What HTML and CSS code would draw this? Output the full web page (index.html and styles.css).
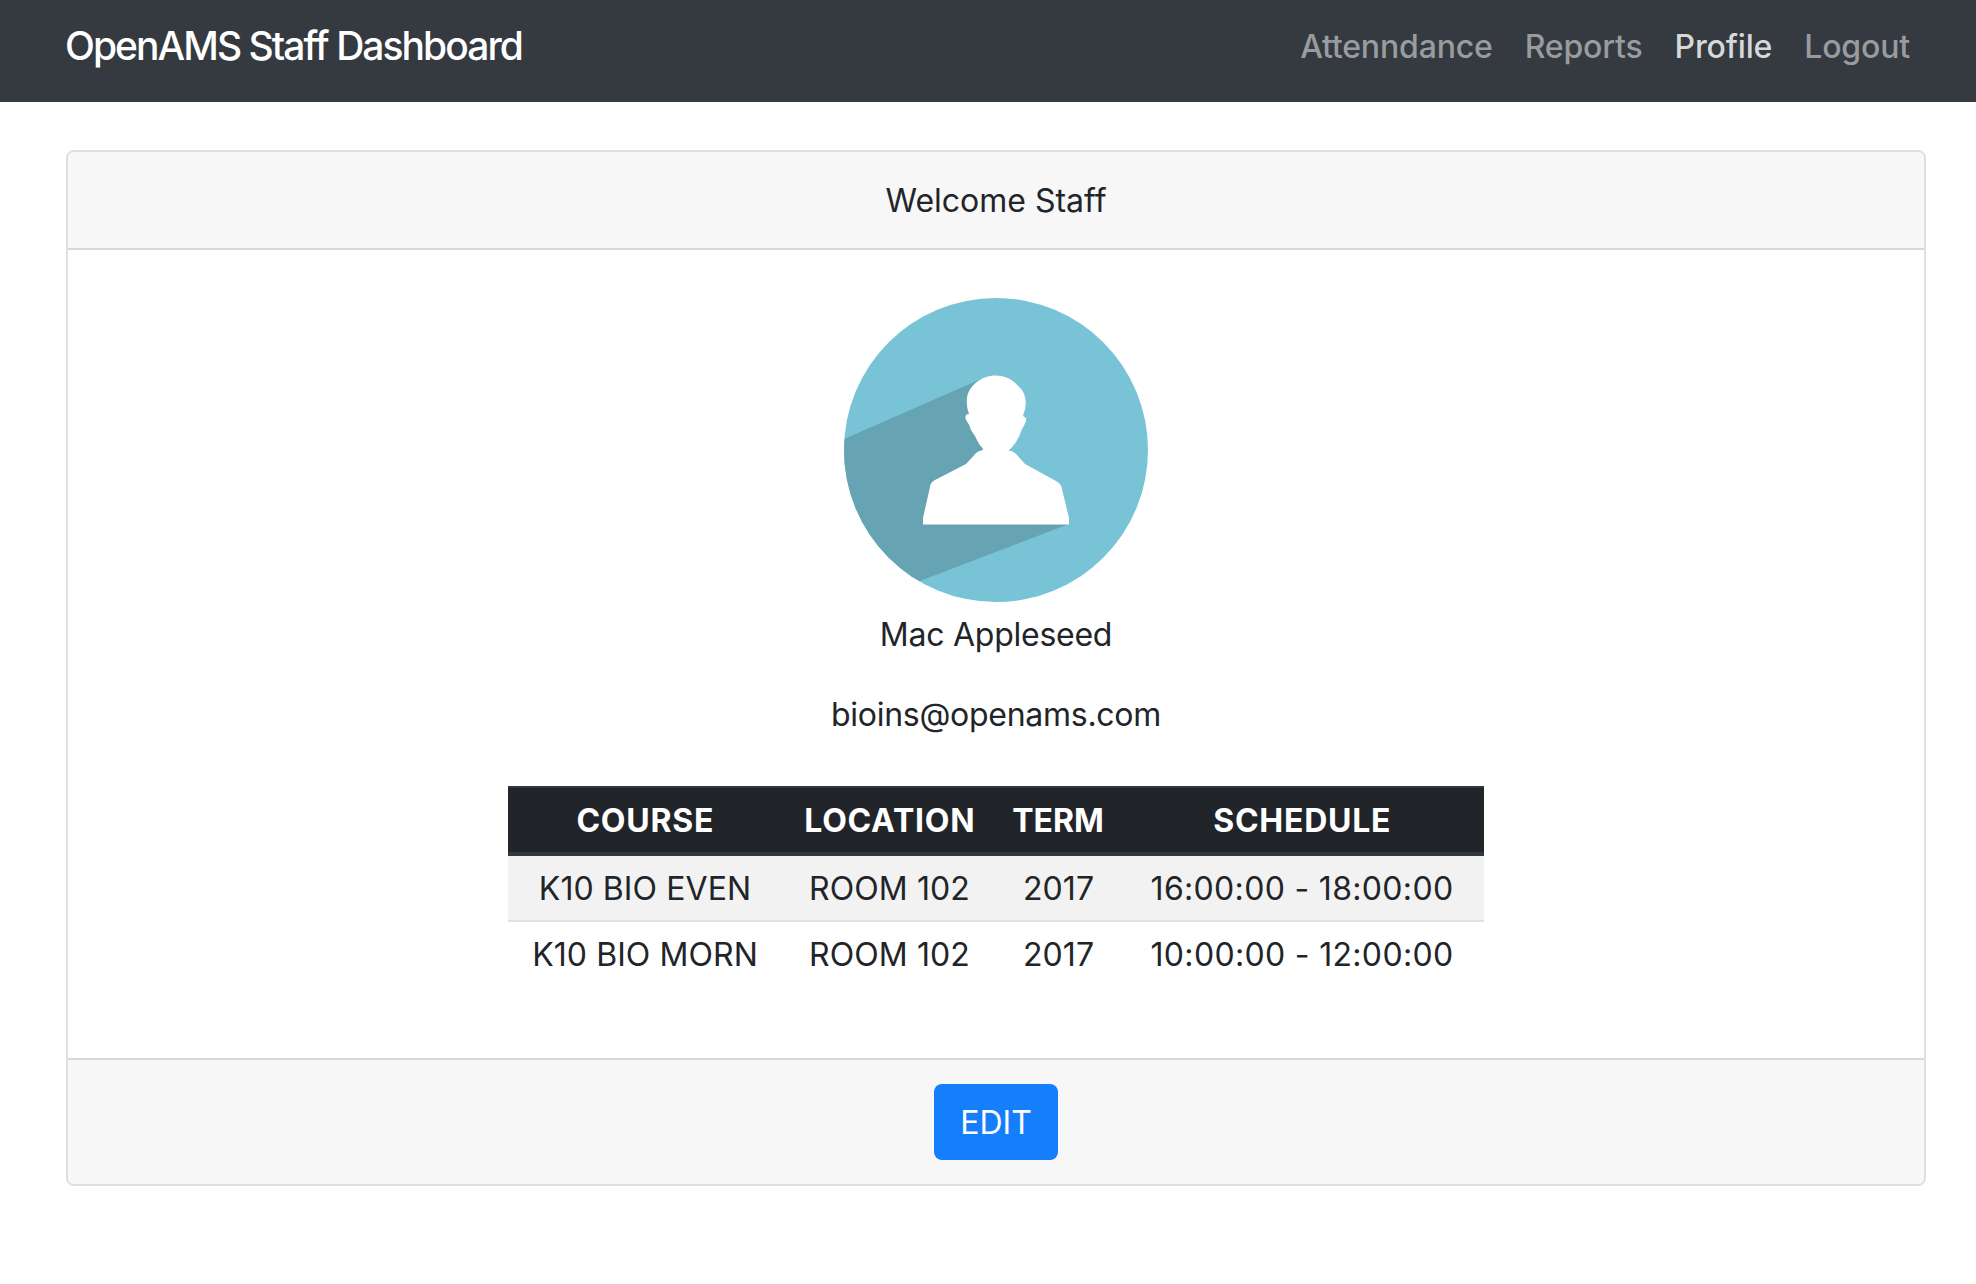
FILE: index.html
```
<!DOCTYPE html>
<html lang="en">
<head>
<meta charset="utf-8">
<title>OpenAMS Staff Dashboard</title>
<link rel="stylesheet" href="styles.css">
</head>
<body>
<nav class="navbar">
  <a class="brand">OpenAMS Staff Dashboard</a>
  <div class="nav-links">
    <a>Attenndance</a>
    <a>Reports</a>
    <a class="active">Profile</a>
    <a>Logout</a>
  </div>
</nav>
<main class="card">
  <header class="card-header">Welcome Staff</header>
  <section class="card-body">
    <svg class="avatar" viewBox="0 0 304 304" role="img" aria-label="Staff avatar">
      <defs><clipPath id="disc"><circle cx="152" cy="152" r="152"/></clipPath></defs>
      <circle cx="152" cy="152" r="152" fill="#79c3d7"/>
      <path clip-path="url(#disc)" fill="#66a4b4" d="M137 81L-2 142V310H54L76 283L225 226H150V90Z"/>
      <path fill="#fff" d="M79 226.500V220L86 189Q86 185 91 182L122 166Q125 163 132 155Q134 153 139 152L138.500 150Q135 147 131 138L127 132Q126 127 122 122Q120 116 125 116Q122 108 123 100C125 87 138 77.500 151.500 77.500C164 77.500 171 84 178 92Q185 103 179 118L182 120Q183 123 178 131Q173 146 164.500 152.500Q170 153 173 157L181 166L212 183Q217 186 217.500 189L225 220V226.500Z"/>
    </svg>
    <p class="name">Mac Appleseed</p>
    <p class="email">bioins@openams.com</p>
    <table class="courses">
      <colgroup><col class="course"><col class="location"><col class="term"><col class="schedule"></colgroup>
      <thead><tr><th>COURSE</th><th>LOCATION</th><th class="tight">TERM</th><th>SCHEDULE</th></tr></thead>
      <tbody>
        <tr><td>K10 BIO EVEN</td><td>ROOM 102</td><td>2017</td><td class="time">16:00:00 - 18:00:00</td></tr>
        <tr><td>K10 BIO MORN</td><td>ROOM 102</td><td>2017</td><td class="time">10:00:00 - 12:00:00</td></tr>
      </tbody>
    </table>
  </section>
  <footer class="card-footer"><button class="edit">EDIT</button></footer>
</main>
</body>
</html>
```
FILE: styles.css
```
* {
  box-sizing: border-box;
}

body {
  margin: 0;
  background: #fff;
  color: #212529;
  font: 400 32px/48px Inter, "Liberation Sans", sans-serif;
}

.navbar {
  height: 102px;
  padding: 16px 66px 0 65px;
  display: flex;
  justify-content: space-between;
  align-items: flex-start;
  background: #343a40;
}

.brand {
  color: #fff;
  font-size: 39px;
  font-weight: 450;
  line-height: 60px;
  letter-spacing: -1.95px;
}

.nav-links {
  display: flex;
  gap: 32px;
  padding-top: 7px;
  font-weight: 450;
  letter-spacing: -.16px;
}

.nav-links a {
  color: #999c9f;
}

.nav-links .active {
  color: #d6d8d9;
}

.card {
  width: 1860px;
  height: 1036px;
  margin: 48px 0 0 66px;
  border: 2px solid #dfdfdf;
  border-radius: 8px;
  display: flex;
  flex-direction: column;
  overflow: hidden;
}

.card-header {
  height: 98px;
  padding-top: 25px;
  text-align: center;
  background: #f7f7f7;
  border-bottom: 2px solid #d8d8d8;
}

.card-body {
  flex: 1;
  padding-top: 48px;
  display: flex;
  flex-direction: column;
  align-items: center;
}

.avatar {
  width: 304px;
  height: 304px;
}

p {
  margin: 0;
}

.name {
  margin-top: 9px;
  letter-spacing: -.25px;
}

.email {
  margin-top: 32px;
  letter-spacing: -.27px;
}

.courses {
  width: 976px;
  margin-top: 47px;
  table-layout: fixed;
  border-collapse: separate;
  border-spacing: 0;
  text-align: center;
}

.course { width: 273px; }
.location { width: 216px; }
.term { width: 122px; }
.schedule { width: 365px; }

th,
td {
  padding: 9px 0 7px;
  white-space: nowrap;
}

th {
  background: #212529;
  color: #fff;
  border-top: 2px solid #32383e;
  border-bottom: 4px solid #32383e;
  padding-left: 1.5px;
  font-weight: 700;
  letter-spacing: .75px;
}

.tight {
  padding-left: 0;
  letter-spacing: 0;
}

td {
  padding-left: 1px;
  letter-spacing: .08px;
}

.time {
  letter-spacing: .32px;
}

tbody tr:first-child {
  background: #f2f2f2;
}

tbody tr + tr td {
  border-top: 2px solid #dee2e6;
}

.card-footer {
  height: 126px;
  padding: 24px;
  display: flex;
  justify-content: center;
  background: #f7f7f7;
  border-top: 2px solid #d8d8d8;
}

.edit {
  width: 124px;
  height: 76px;
  padding: 2px 0 0;
  border: 0;
  border-radius: 8px;
  background: #157efb;
  color: #fff;
  font: inherit;
}
```
